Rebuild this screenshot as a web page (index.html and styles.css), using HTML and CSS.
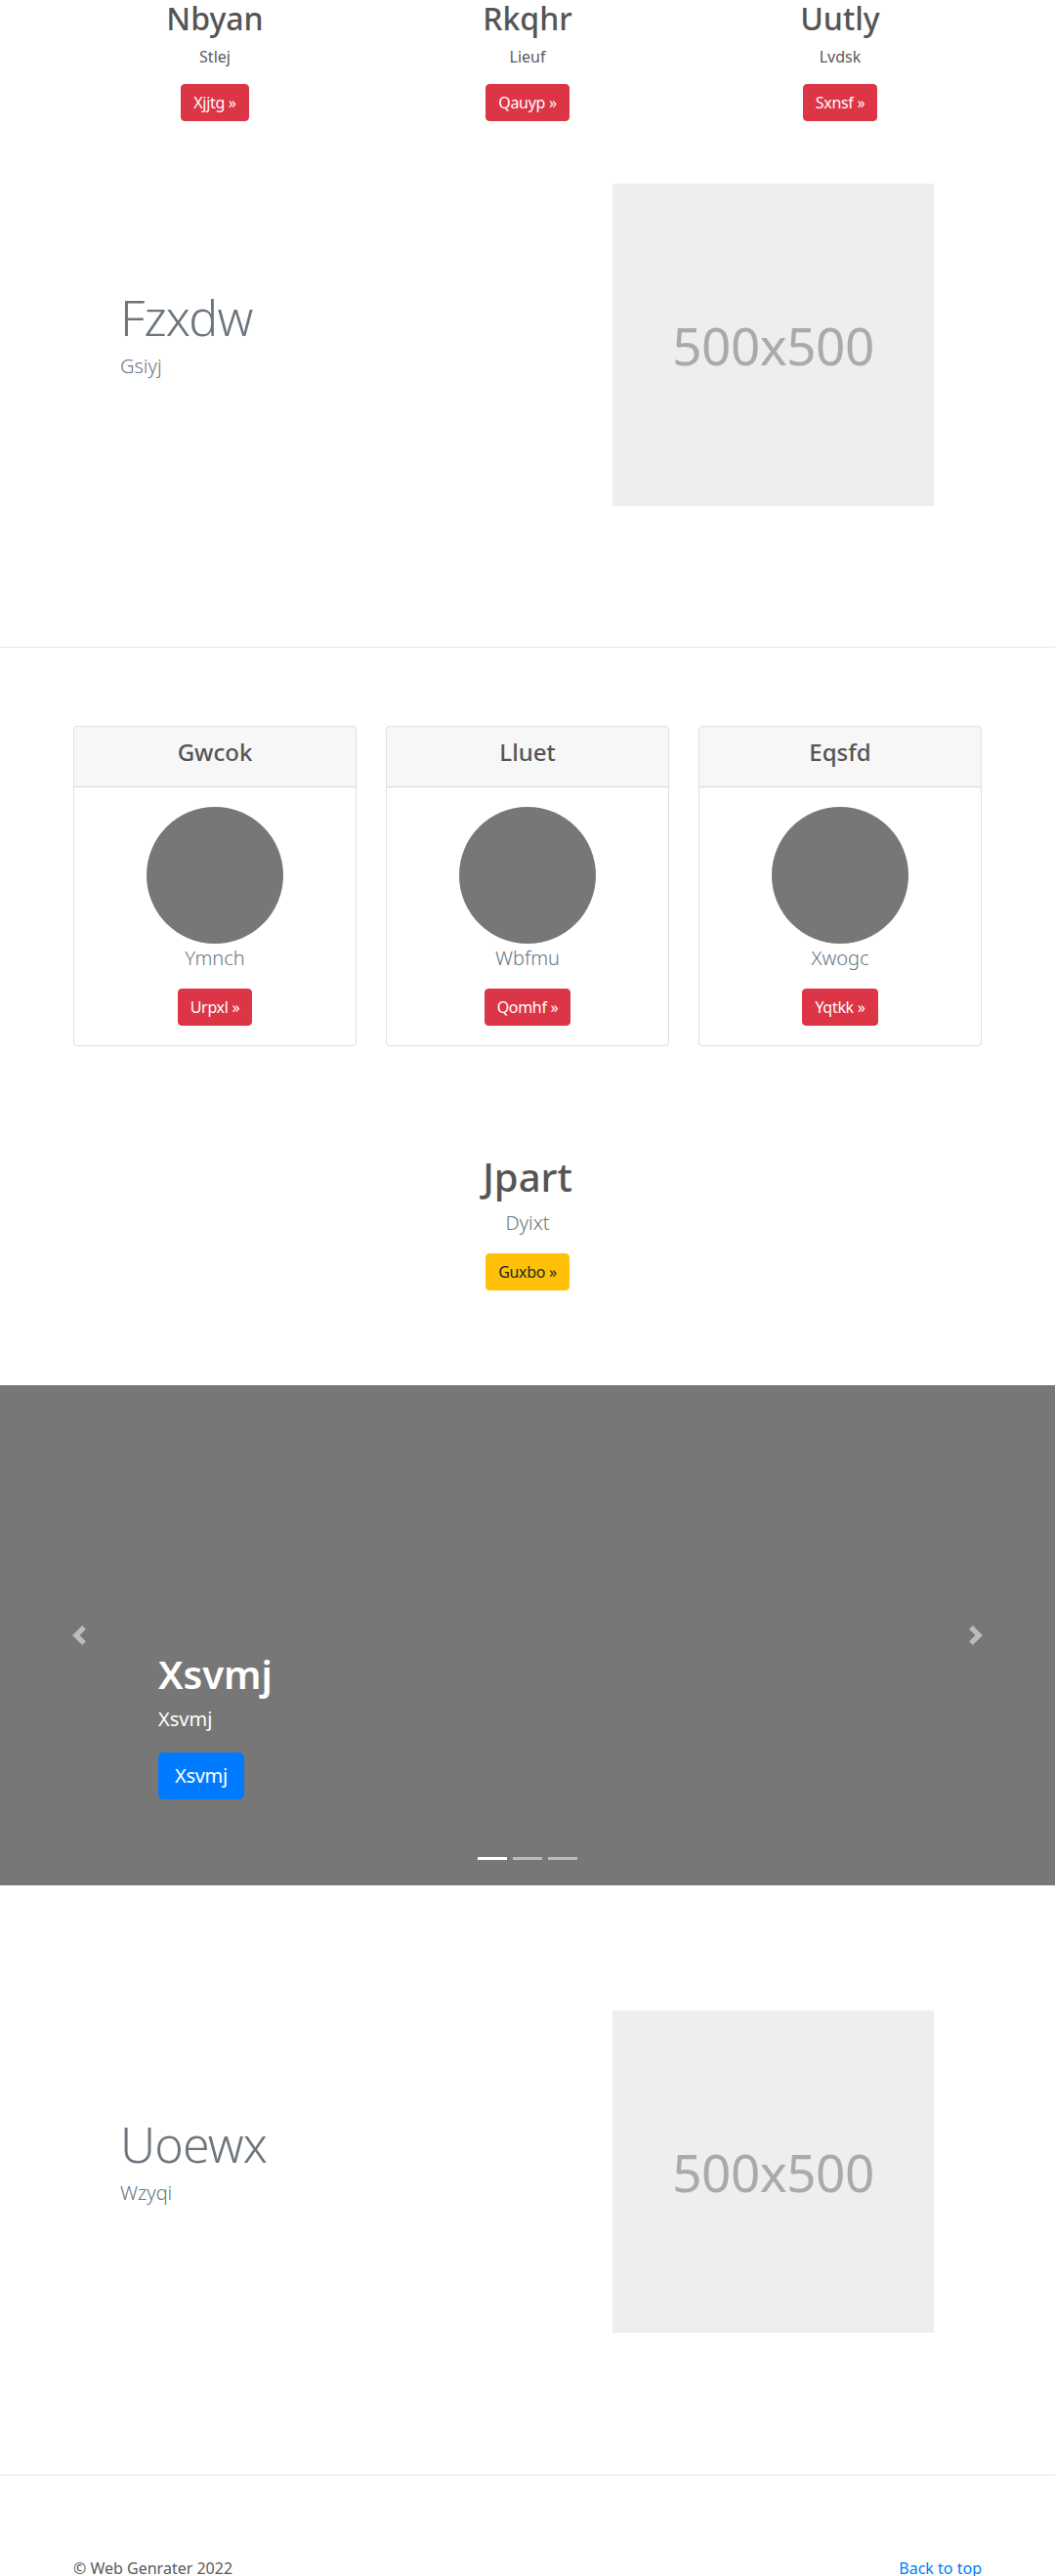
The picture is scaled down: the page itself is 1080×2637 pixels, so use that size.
FILE: index.html
```html
<!DOCTYPE html>
<html lang="en">
<head>
<meta charset="utf-8">
<title>Web Genrater</title>
<link rel="stylesheet" href="styles.css">
</head>
<body>

<section class="trio">
  <div class="trio-col">
    <h2 class="trio-title">Nbyan</h2>
    <p class="trio-text">Stlej</p>
    <a class="btn btn-danger" href="#">Xjjtg &raquo;</a>
  </div>
  <div class="trio-col">
    <h2 class="trio-title">Rkqhr</h2>
    <p class="trio-text">Lieuf</p>
    <a class="btn btn-danger" href="#">Qauyp &raquo;</a>
  </div>
  <div class="trio-col">
    <h2 class="trio-title">Uutly</h2>
    <p class="trio-text">Lvdsk</p>
    <a class="btn btn-danger" href="#">Sxnsf &raquo;</a>
  </div>
</section>

<section class="featurette featurette-top">
  <div class="featurette-text">
    <h2 class="featurette-heading">Fzxdw</h2>
    <p class="featurette-lead">Gsiyj</p>
  </div>
  <div class="placeholder"><span>500x500</span></div>
</section>

<hr class="divider divider-cards">

<section class="cards">
  <div class="card">
    <div class="card-header"><h4 class="card-title">Gwcok</h4></div>
    <div class="card-body">
      <div class="avatar"></div>
      <p class="card-lead">Ymnch</p>
      <a class="btn btn-danger" href="#">Urpxl &raquo;</a>
    </div>
  </div>
  <div class="card">
    <div class="card-header"><h4 class="card-title">Lluet</h4></div>
    <div class="card-body">
      <div class="avatar"></div>
      <p class="card-lead">Wbfmu</p>
      <a class="btn btn-danger" href="#">Qomhf &raquo;</a>
    </div>
  </div>
  <div class="card">
    <div class="card-header"><h4 class="card-title">Eqsfd</h4></div>
    <div class="card-body">
      <div class="avatar"></div>
      <p class="card-lead">Xwogc</p>
      <a class="btn btn-danger" href="#">Yqtkk &raquo;</a>
    </div>
  </div>
</section>

<section class="cta">
  <h1 class="cta-title">Jpart</h1>
  <p class="cta-lead">Dyixt</p>
  <a class="btn btn-warning" href="#">Guxbo &raquo;</a>
</section>

<section class="carousel">
  <div class="carousel-caption">
    <h1 class="caption-title">Xsvmj</h1>
    <p class="caption-text">Xsvmj</p>
    <p class="caption-text"><a class="btn btn-lg btn-primary" href="#">Xsvmj</a></p>
  </div>
  <a class="carousel-control control-prev" href="#" aria-label="Previous">
    <svg width="20" height="20" viewBox="0 0 8 8"><path fill="#fff" d="M5.25 0l-4 4 4 4 1.5-1.5L4.25 4l2.5-2.5L5.25 0z"/></svg>
  </a>
  <a class="carousel-control control-next" href="#" aria-label="Next">
    <svg width="20" height="20" viewBox="0 0 8 8"><path fill="#fff" d="M2.75 0l-1.5 1.5L3.75 4l-2.5 2.5L2.75 8l4-4-4-4z"/></svg>
  </a>
  <ol class="indicators">
    <li class="indicator active"></li>
    <li class="indicator"></li>
    <li class="indicator"></li>
  </ol>
</section>

<section class="featurette featurette-bottom">
  <div class="featurette-text">
    <h2 class="featurette-heading">Uoewx</h2>
    <p class="featurette-lead">Wzyqi</p>
  </div>
  <div class="placeholder"><span>500x500</span></div>
</section>

<hr class="divider divider-footer">

<footer class="footer">
  <p class="footer-copy">&copy; Web Genrater 2022</p>
  <a class="footer-link" href="#">Back to top</a>
</footer>

</body>
</html>
```

FILE: styles.css
```css
* { box-sizing: border-box; }

html, body {
  margin: 0;
  padding: 0;
}

body {
  font-family: "Segoe UI", "Noto Sans", "Open Sans", Arial, sans-serif;
  font-size: 16px;
  line-height: 1.5;
  color: #5a5a5a;
  background: #fff;
}

/* Buttons */
.btn {
  display: inline-block;
  padding: 6px 12px;
  font-size: 16px;
  line-height: 24px;
  font-weight: 400;
  letter-spacing: -0.3px;
  border: 1px solid transparent;
  border-radius: 4px;
  text-decoration: none;
  vertical-align: middle;
}
.btn-danger { background: #dc3545; border-color: #dc3545; color: #fff; }
.btn-warning { background: #ffc107; border-color: #ffc107; color: #212529; }
.btn-primary { background: #007bff; border-color: #007bff; color: #fff; }
.btn-lg {
  padding: 8px 16px;
  font-size: 20px;
  line-height: 30px;
  border-radius: 5px;
}

/* Top three columns */
.trio {
  width: 960px;
  margin: 0 auto;
  display: grid;
  grid-template-columns: repeat(3, 1fr);
  text-align: center;
}
.trio-title {
  margin: 0 0 8px;
  font-size: 32px;
  font-weight: 500;
  line-height: 1.2;
  color: #555;
}
.trio-text {
  margin: 0 0 16px;
}

/* Featurettes */
.featurette {
  width: 960px;
  margin-left: auto;
  margin-right: auto;
  display: flex;
  align-items: center;
}
.featurette-top { margin-top: 64px; margin-bottom: 144px; }
.featurette-bottom { margin-top: 128px; margin-bottom: 145px; }

.featurette-text {
  flex: 0 0 567px;
  padding-left: 63px;
}
.featurette-heading {
  margin: 0 0 10px;
  font-size: 50px;
  font-weight: 300;
  line-height: 1;
  letter-spacing: -0.8px;
  color: #6c757d;
}
.featurette-lead {
  margin: 0 0 16px;
  font-size: 20px;
  font-weight: 300;
  line-height: 30px;
  color: #6c757d;
}
.placeholder {
  width: 329px;
  height: 330px;
  background: #eee;
  display: flex;
  align-items: center;
  justify-content: center;
  color: #aaa;
  font-size: 53px;
  font-weight: 400;
  letter-spacing: -0.5px;
  line-height: 1;
}

/* Divider */
.divider {
  border: 0;
  border-top: 1px solid rgba(0, 0, 0, 0.1);
  margin: 0;
  height: 0;
}
.divider-cards { margin-bottom: 80px; }

/* Cards */
.cards {
  width: 930px;
  margin: 0 auto;
  display: grid;
  grid-template-columns: repeat(3, 1fr);
  gap: 30px;
}
.card {
  border: 1px solid rgba(0, 0, 0, 0.125);
  border-radius: 4px;
  text-align: center;
  overflow: hidden;
}
.card-header {
  padding: 12px 20px;
  background: rgba(0, 0, 0, 0.03);
  border-bottom: 1px solid rgba(0, 0, 0, 0.125);
}
.card-title {
  margin: 0 0 8px;
  font-size: 24px;
  font-weight: 500;
  line-height: 1.2;
  color: #555;
}
.card-body {
  padding: 20px;
}
.avatar {
  width: 140px;
  height: 140px;
  border-radius: 50%;
  background: #777;
  margin: 0 auto;
}
.card-lead {
  margin: 0 0 16px;
  font-size: 20px;
  font-weight: 300;
  line-height: 30px;
  color: #6c757d;
}

/* Call to action */
.cta {
  margin-top: 110px;
  text-align: center;
}
.cta-title {
  margin: 0 0 8px;
  font-size: 40px;
  font-weight: 500;
  line-height: 48px;
  color: #555;
}
.cta-lead {
  margin: 0 0 16px;
  font-size: 20px;
  font-weight: 300;
  line-height: 30px;
  color: #6c757d;
}

/* Carousel */
.carousel {
  position: relative;
  margin-top: 97px;
  height: 512px;
  background: #777;
  display: flex;
  flex-direction: column;
  justify-content: flex-end;
  padding: 0 162px 68px;
  color: #fff;
}
.caption-title {
  margin: 0 0 8px;
  font-size: 40px;
  font-weight: 600;
  line-height: 48px;
}
.caption-text {
  margin: 0 0 20px;
  font-size: 20px;
  line-height: 28px;
}
.carousel-control {
  position: absolute;
  top: 0;
  bottom: 0;
  width: 15%;
  display: flex;
  align-items: center;
  justify-content: center;
  opacity: 0.5;
}
.control-prev { left: 0; }
.control-next { right: 0; }
.indicators {
  position: absolute;
  left: 0;
  right: 0;
  bottom: 0;
  margin: 0 0 16px;
  padding: 0;
  list-style: none;
  display: flex;
  justify-content: center;
}
.indicator {
  width: 30px;
  height: 3px;
  margin: 10px 3px;
  background: #fff;
  opacity: 0.5;
}
.indicator.active { opacity: 1; }

/* Footer */
.footer {
  width: 930px;
  margin: 0 auto;
  padding-top: 87px;
  display: flex;
  justify-content: space-between;
  line-height: 16px;
  font-size: 16px;
}
.footer-copy { margin: 0; }
.footer-link { color: #007bff; text-decoration: none; }
```
